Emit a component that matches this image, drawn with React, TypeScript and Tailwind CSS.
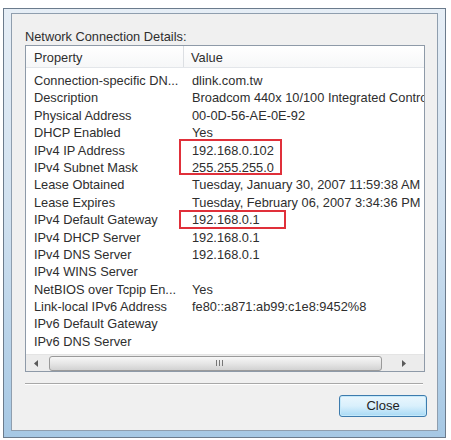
import React from "react";

const rows: [string, string][] = [
  ["Connection-specific DN...", "dlink.com.tw"],
  ["Description", "Broadcom 440x 10/100 Integrated Controller"],
  ["Physical Address", "00-0D-56-AE-0E-92"],
  ["DHCP Enabled", "Yes"],
  ["IPv4 IP Address", "192.168.0.102"],
  ["IPv4 Subnet Mask", "255.255.255.0"],
  ["Lease Obtained", "Tuesday, January 30, 2007 11:59:38 AM"],
  ["Lease Expires", "Tuesday, February 06, 2007 3:34:36 PM"],
  ["IPv4 Default Gateway", "192.168.0.1"],
  ["IPv4 DHCP Server", "192.168.0.1"],
  ["IPv4 DNS Server", "192.168.0.1"],
  ["IPv4 WINS Server", ""],
  ["NetBIOS over Tcpip En...", "Yes"],
  ["Link-local IPv6 Address", "fe80::a871:ab99:c1e8:9452%8"],
  ["IPv6 Default Gateway", ""],
  ["IPv6 DNS Server", ""],
];

export default function App() {
  return (
    <div
      className="w-[451px] h-[440px] bg-white overflow-hidden pt-[8px] pl-[3px] text-[#2e2e2e]"
      style={{ fontFamily: '"Liberation Sans", Arial, sans-serif' }}
    >
      <div className="w-[443px] h-[430px] border border-[#6b7b8c] bg-gradient-to-b from-[#e6eef6] via-[#cfe0ef] to-[#a6c8e4] pt-[4px] pl-[7px] pr-[6px] pb-[6px]">
        <div className="w-[427px] h-[418px] border border-[#8f9eae] bg-[#f0f0f0] pl-[13px] pt-[14px] text-[12.8px]">
          <div className="h-[17px] leading-[17px]">Network Connection Details:</div>
          <div className="relative w-[400px] h-[327px] border border-[#8e9aa8] bg-white">
            {/* header */}
            <div className="flex h-[22px] border-b border-[#e3e6ea] bg-gradient-to-b from-white to-[#f6f7f8]">
              <div className="w-[158px] h-full border-r border-[#dcdfe3] pl-[8px] leading-[24px]">Property</div>
              <div className="flex-1 pl-[7px] leading-[24px]">Value</div>
            </div>
            <div className="pt-[4px]">
              {rows.map(([k, v], i) => (
                <div key={i} className="flex h-[17.4px] leading-[17.4px] whitespace-nowrap">
                  <div className="w-[158px] pl-[8px] overflow-hidden">{k}</div>
                  <div className="w-[240px] pl-[8px] overflow-hidden">{v}</div>
                </div>
              ))}
            </div>
            {/* scrollbar */}
            <div className="absolute left-0 right-0 bottom-0 h-[17px] bg-[#ececec] border-t border-[#e4e4e4] flex items-center">
              <div className="w-[21px] h-full flex items-center justify-center">
                <svg width="5" height="7" viewBox="0 0 5 7">
                  <path d="M4 0 L0 3.5 L4 7 Z" fill="#5a5a5a" />
                </svg>
              </div>
              <div className="ml-[2px] w-[333px] h-[15px] rounded-[3px] border border-[#9a9a9a] bg-gradient-to-b from-[#f7f7f7] via-[#e6e6e6] to-[#d2d2d2] flex items-center justify-end pr-[158px]">
                <div className="flex gap-[2px]">
                  <div className="w-[1px] h-[6px] bg-[#777]" />
                  <div className="w-[1px] h-[6px] bg-[#777]" />
                  <div className="w-[1px] h-[6px] bg-[#777]" />
                </div>
              </div>
              <div className="flex-1 h-full flex items-center justify-center">
                <svg width="5" height="7" viewBox="0 0 5 7">
                  <path d="M1 0 L5 3.5 L1 7 Z" fill="#5a5a5a" />
                </svg>
              </div>
            </div>
            {/* red highlight boxes */}
            <div className="absolute left-[153px] top-[93px] w-[103px] h-[36px] border-2 border-[#e0303a]" />
            <div className="absolute left-[153px] top-[164px] w-[107px] h-[19px] border-2 border-[#e0303a]" />
          </div>
          <div className="mt-[11px] w-[398px] border-t border-[#a8a8a8] border-b border-b-white" />
          <div className="flex justify-end w-[402px] mt-[10px]">
            <button className="w-[88px] h-[22px] rounded-[3px] border border-[#3d7bad] bg-gradient-to-b from-[#eaf6fd] via-[#d9f0fc] to-[#a7d9f5] shadow-[inset_0_0_0_1px_#c5e9fa] text-[13px] text-[#222]">
              Close
            </button>
          </div>
        </div>
      </div>
    </div>
  );
}
